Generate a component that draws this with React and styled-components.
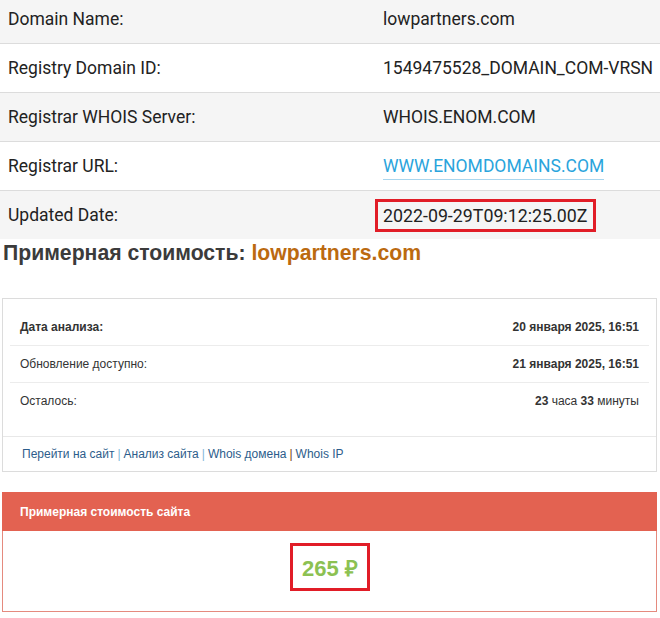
import styled, { createGlobalStyle } from "styled-components";

const GlobalStyle = createGlobalStyle`
  body {
    margin: 0;
    background: #fff;
    font-family: "Liberation Sans", Arial, sans-serif;
  }
`;

const Page = styled.div`
  width: 660px;
  overflow: hidden;
`;

const WhoisTable = styled.div`
  margin-top: -5px;
  font-family: Roboto, "Liberation Sans", sans-serif;
  font-size: 17.5px;
  color: #222;
`;

const WhoisRow = styled.div`
  display: grid;
  grid-template-columns: 375px 1fr;
  align-items: center;
  height: 48px;
  border-bottom: ${(p) => (p.$last ? "none" : "1px solid #dcdcdc")};
  background: ${(p) => (p.$odd ? "#f5f5f5" : "#fff")};
`;

const Cell = styled.div`
  padding: 0 8px;
  white-space: nowrap;
`;

const UrlLink = styled.a`
  color: #2aa4dc;
  text-decoration: none;
  padding-bottom: 3px;
  border-bottom: 1px solid #a9d6ee;
`;

const Highlight = styled.span`
  display: inline-block;
  margin-left: -8px;
  padding: 3px 6px 3px 5px;
  border: 3px solid #e11d27;
  font-size: 17.8px;
`;

const Heading = styled.h2`
  margin: 0;
  padding: 2px 3px 0;
  height: 57px;
  font-size: 21.2px;
  font-weight: bold;
  color: #3b3b3b;
`;

const Domain = styled.span`
  color: #bb6a10;
`;

const Card = styled.div`
  margin: 0 3px 20px 2px;
  border: 1px solid #dcdcdc;
  font-size: 12px;
  color: #333;
`;

const CardBody = styled.div`
  padding: 10px 7px 17px;
`;

const InfoRow = styled.div`
  display: flex;
  justify-content: space-between;
  align-items: center;
  height: 36px;
  padding: 0 10px;
  border-top: ${(p) => (p.$first ? "none" : "1px solid #ececec")};
  font-weight: ${(p) => (p.$bold ? "bold" : "normal")};
`;

const Value = styled.span`
  font-weight: ${(p) => (p.$bold ? "bold" : "normal")};
`;

const Footer = styled.div`
  border-top: 1px solid #e8e8e8;
  height: 34px;
  display: flex;
  align-items: center;
  padding-left: 19px;
`;

const FooterLink = styled.a`
  color: #2d5d8b;
  text-decoration: none;
`;

const Sep = styled.span`
  color: ${(p) => p.$color};
  margin: 0 3px;
`;

const PriceCard = styled.div`
  margin: 0 3px 0 2px;
  border: 1px solid #e58a7e;
  border-top: none;
`;

const PriceHeader = styled.div`
  background: #e36251;
  color: #fff;
  font-size: 12px;
  font-weight: bold;
  height: 39px;
  display: flex;
  align-items: center;
  padding-left: 18px;
  margin: 0 -1px;
`;

const PriceBody = styled.div`
  display: flex;
  justify-content: center;
  padding: 12px 0 20px;
`;

const Price = styled.div`
  border: 3px solid #e11d27;
  padding: 6px 9px;
  font-size: 22px;
  font-weight: bold;
  color: #8cc152;
  margin-left: 1px;
`;

const whois = [
  ["Domain Name:", "lowpartners.com"],
  ["Registry Domain ID:", "1549475528_DOMAIN_COM-VRSN"],
  ["Registrar WHOIS Server:", "WHOIS.ENOM.COM"],
  ["Registrar URL:", "link"],
  ["Updated Date:", "date"],
];

export default function App() {
  return (
    <Page>
      <GlobalStyle />
      <WhoisTable>
        {whois.map(([label, value], i) => (
          <WhoisRow key={label} $odd={i % 2 === 0} $last={i === whois.length - 1}>
            <Cell>{label}</Cell>
            <Cell>
              {value === "link" ? (
                <UrlLink href="#">WWW.ENOMDOMAINS.COM</UrlLink>
              ) : value === "date" ? (
                <Highlight>2022-09-29T09:12:25.00Z</Highlight>
              ) : (
                value
              )}
            </Cell>
          </WhoisRow>
        ))}
      </WhoisTable>

      <Heading>
        Примерная стоимость: <Domain>lowpartners.com</Domain>
      </Heading>

      <Card>
        <CardBody>
          <InfoRow $first $bold>
            <span>Дата анализа:</span>
            <span>20 января 2025, 16:51</span>
          </InfoRow>
          <InfoRow>
            <span>Обновление доступно:</span>
            <Value $bold>21 января 2025, 16:51</Value>
          </InfoRow>
          <InfoRow>
            <span>Осталось:</span>
            <span>
              <Value $bold>23</Value> часа <Value $bold>33</Value> минуты
            </span>
          </InfoRow>
        </CardBody>
        <Footer>
          <FooterLink href="#">Перейти на сайт</FooterLink>
          <Sep $color="#7fb8d8">|</Sep>
          <FooterLink href="#">Анализ сайта</FooterLink>
          <Sep $color="#7fb8d8">|</Sep>
          <FooterLink href="#">Whois домена</FooterLink>
          <Sep $color="#7a3b12">|</Sep>
          <FooterLink href="#">Whois IP</FooterLink>
        </Footer>
      </Card>

      <PriceCard>
        <PriceHeader>Примерная стоимость сайта</PriceHeader>
        <PriceBody>
          <Price>265 ₽</Price>
        </PriceBody>
      </PriceCard>
    </Page>
  );
}
